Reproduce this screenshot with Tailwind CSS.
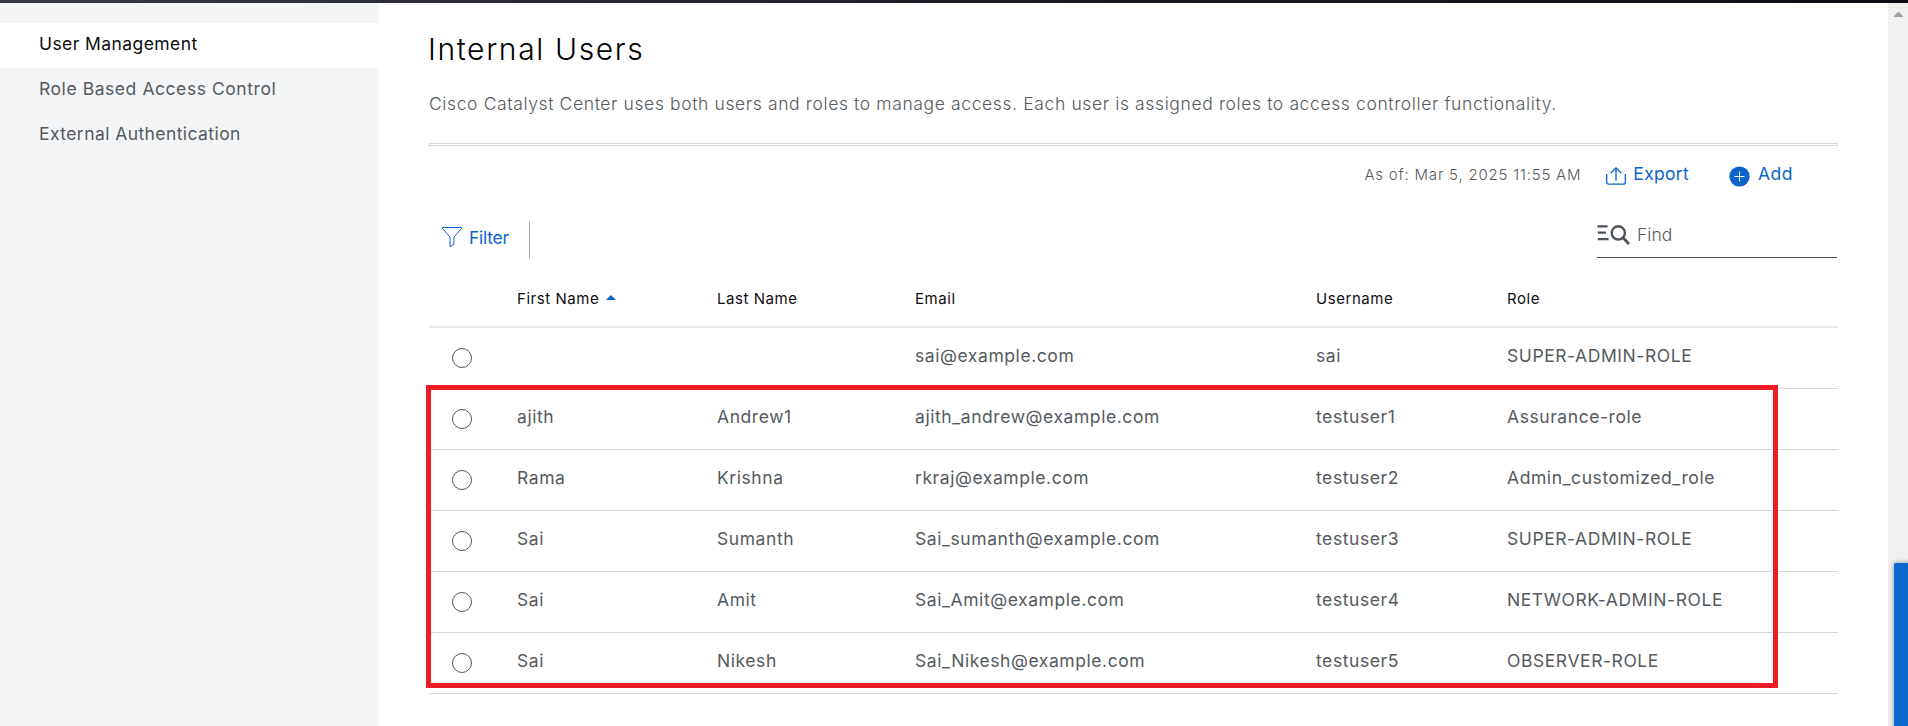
<!DOCTYPE html>
<html lang="en">
<head>
<meta charset="utf-8">
<title>Internal Users</title>
<script src="https://cdn.jsdelivr.net/npm/@tailwindcss/browser@4"></script>
</head>
<body class="relative h-[726px] w-full overflow-hidden bg-white font-['Inter',sans-serif] text-[17.5px] leading-[22px] text-[#545a5e]">
<div class="flex h-full flex-col">
  <header class="h-[3px] shrink-0 bg-linear-to-r from-[#373d43] via-[#1c1e24] to-[#0d0c12]"></header>
  <div class="flex min-h-0 flex-1">
    <nav class="w-[379px] shrink-0 bg-[#f4f5f7] pt-5">
      <a class="flex h-[45px] items-center bg-white pb-1 pl-[39px] tracking-[0.42px] text-[#0d0d0f]">User Management</a>
      <a class="flex h-[45px] items-center pb-1 pl-[39px] tracking-[0.56px]">Role Based Access Control</a>
      <a class="flex h-[45px] items-center pb-1 pl-[39px] tracking-[0.42px]">External Authentication</a>
    </nav>
    <main class="flex-1 pl-[50px] pr-[50px]">
      <h1 class="-ml-px pt-[26px] text-[30px] leading-[40px] font-light tracking-[1.63px] text-black">Internal Users</h1>
      <p class="mt-[24px] font-light tracking-[0.62px] whitespace-nowrap">Cisco Catalyst Center uses both users and roles to manage access. Each user is assigned roles to access controller functionality.</p>
      <div class="mt-[28px] h-[3px] border border-[#d4d6d8]"></div>

      <div class="flex h-[63px] justify-end pr-[45px] pt-[17px]">
        <span class="mr-[25px] pt-[2px] text-[15px] leading-[20px] font-light tracking-[0.8px]">As of: Mar 5, 2025 11:55 AM</span>
        <a class="mr-[40px] flex items-start text-[#0d63c9]">
          <svg class="mt-[4px] mr-[7px] h-[20px] w-[20px]" viewBox="0 0 20 20" fill="none" stroke="currentColor" stroke-width="1.3"><path d="M.7 7v8.2a2 2 0 0 0 2 2h14.6a2 2 0 0 0 2-2V7M10 13.8V1M4.8 6 10 1l5.2 5"/></svg>
          <span class="leading-[22px] tracking-[0.3px]">Export</span>
        </a>
        <a class="flex items-start text-[#0d63c9]">
          <svg class="mt-[3px] mr-[8px] h-[21px] w-[21px]" viewBox="0 0 21 21"><circle cx="10.5" cy="10.5" r="10.1" fill="currentColor"/><path d="M10.5 5.5v10M5.5 10.5h10" stroke="#fff" stroke-width="1"/></svg>
          <span class="leading-[22px] tracking-[0.5px]">Add</span>
        </a>
      </div>

      <div class="flex justify-between">
        <div class="flex h-[49px] items-start pl-[12px] pt-[12px]">
          <svg class="mt-[5px] mr-[6px] h-[22px] w-[22px] text-[#0d63c9]" viewBox="0 0 22 22" fill="none" stroke="currentColor" stroke-width="1" stroke-linejoin="round"><path d="M1.2 1.5h19.6v.7L12.9 11v7.2L9 20.6V11L1.2 2.2z"/></svg>
          <span class="mt-[6px] w-[60px] tracking-[-0.25px] text-[#0d63c9]">Filter</span>
          <span class="h-[38px] w-px shrink-0 bg-[#a3a6a9]"></span>
        </div>
        <div class="mr-px flex h-[49px] w-[240px] items-start border-b border-[#4b525a] pt-[14px]">
          <svg class="mt-[2px] mr-[6px] h-[22px] w-[34px] text-[#4d545b]" viewBox="0 0 34 22" fill="none" stroke="currentColor"><path d="M.4 1.3h10.2M.8 7.7H9M.8 14.2h10.8" stroke-width="2.2"/><circle cx="21.3" cy="7.9" r="6.6" stroke-width="2.4"/><path d="m26 12.8 6 6.2" stroke-width="2.8"/></svg>
          <span class="mt-px font-light">Find</span>
        </div>
      </div>

      <div class="relative">
        <table class="w-full table-fixed border-collapse text-left">
          <colgroup><col class="w-[88px]"><col class="w-[200px]"><col class="w-[198px]"><col class="w-[401px]"><col class="w-[191px]"><col></colgroup>
          <thead>
            <tr class="h-[69px] border-b-2 border-[#e8e8e8] text-[15px] tracking-[0.55px] text-[#0d0d0f] [&>th]:p-0 [&>th]:pt-[13px] [&>th]:font-normal">
              <th></th>
              <th><span class="flex items-center">First Name<svg class="ml-[7px] mb-[2px] h-[5px] w-[10px]" viewBox="0 0 10 5"><path d="M0 5 5 0l5 5z" fill="#0d63c9"/></svg></span></th>
              <th>Last Name</th><th>Email</th><th>Username</th><th>Role</th>
            </tr>
          </thead>
          <tbody id="rows" class="tracking-[0.57px] [&>tr]:h-[61px] [&>tr]:border-b [&>tr]:border-[#d5d7d9] [&_td]:p-0 [&_td]:pb-[4px]"></tbody>
        </table>
        <div class="absolute -left-[3px] top-[127px] h-[303px] w-[1352px] border-[5px] border-[#ee1c25]"></div>
      </div>
    </main>
    <aside class="w-5 shrink-0 bg-[#f0f0f0] pt-[9px]">
      <svg class="ml-[6px] h-[5px] w-[9px]" viewBox="0 0 9 5"><path d="M0 5V4l4-4h1l4 4v1z" fill="#a3a3a3"/></svg>
    </aside>
  </div>
</div>
<div class="absolute left-[1894px] top-[563px] h-[170px] w-[30px] rounded-tl-[2px] bg-[#0d68cc] shadow-[0_0_5px_rgba(30,80,120,0.6)]"></div>
<script>
const users = [
  ['', '', 'sai@example.com', 'sai', 'SUPER-ADMIN-ROLE'],
  ['ajith', 'Andrew1', 'ajith_andrew@example.com', 'testuser1', 'Assurance-role'],
  ['Rama', 'Krishna', 'rkraj@example.com', 'testuser2', 'Admin_customized_role'],
  ['Sai', 'Sumanth', 'Sai_sumanth@example.com', 'testuser3', 'SUPER-ADMIN-ROLE'],
  ['Sai', 'Amit', 'Sai_Amit@example.com', 'testuser4', 'NETWORK-ADMIN-ROLE'],
  ['Sai', 'Nikesh', 'Sai_Nikesh@example.com', 'testuser5', 'OBSERVER-ROLE'],
];
document.getElementById('rows').innerHTML = users.map(u =>
  '<tr><td><span class="ml-[23px] mt-[4px] block h-5 w-5 rounded-full border border-[#50565c]"></span></td>' +
  u.map(v => '<td>' + v + '</td>').join('') + '</tr>').join('');
</script>
</body>
</html>
